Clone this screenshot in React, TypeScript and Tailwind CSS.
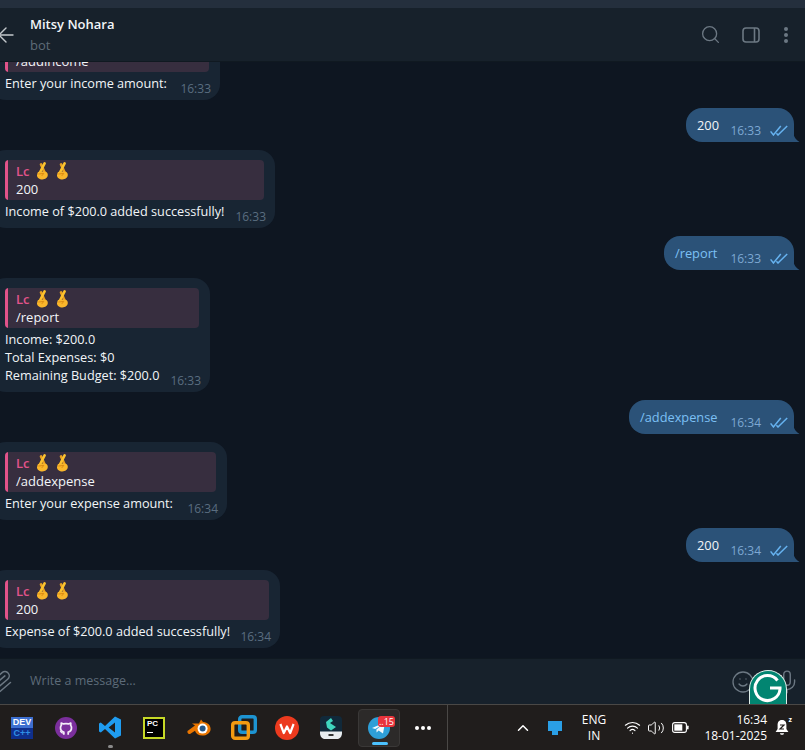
import React from "react";
import { ArrowLeft, Search, Paperclip, Smile, Mic, ChevronUp, Wifi, Volume2 } from "lucide-react";

function Fingers({ x = 0 }: { x?: number }) {
  return (
    <svg width="14" height="18" viewBox="0 0 14 18" style={{ marginLeft: x }} className="shrink-0">
      <path d="M9.4 10 L6 2.4" stroke="#e8a020" strokeWidth="2.6" strokeLinecap="round" fill="none" />
      <path d="M5.2 10 L9.6 1.4" stroke="#fcc22e" strokeWidth="2.6" strokeLinecap="round" fill="none" />
      <path d="M2.4 11.4 C2.4 10.2 3.6 9.4 5 9.4 L9.6 9.4 C11.6 9.4 12.8 10.8 12.8 12.8 C12.8 15.6 10.4 17.4 7.4 17.4 C4.4 17.4 2 15.8 2 13.2 Z" fill="#f9b62b" />
      <path d="M3.8 12 L8.8 11.4 L7 13.6" stroke="#dc8b12" strokeWidth="1" strokeLinecap="round" strokeLinejoin="round" fill="none" />
    </svg>
  );
}

function Ticks() {
  return (
    <svg width="18" height="11" viewBox="0 0 18 11" fill="none" stroke="#66b2ef" strokeWidth="1.5" className="shrink-0">
      <path d="M.6 6.4 L3.4 10 L10.8 1" />
      <path d="M6.4 8.2 L8 10 L17.2 1" />
    </svg>
  );
}

function Reply({ text }: { text: string }) {
  return (
    <div className="flex h-10 overflow-hidden rounded-[4px] bg-[#372e3f]">
      <div className="w-[3px] shrink-0 bg-[#e0538a]" />
      <div className="flex flex-col pl-2 pt-[2px] leading-[18px]">
        <div className="flex h-[18px] items-center font-semibold text-[#e0538a]">
          Lc<Fingers x={5} /><Fingers x={6} />
        </div>
        <div className="text-[#f2f5f8]">{text}</div>
      </div>
    </div>
  );
}

function Left({ w, reply, lines, time, cls = "" }: { w: string; reply: string; lines: string[]; time: string; cls?: string }) {
  return (
    <div className={`relative -ml-[10px] shrink-0 rounded-[16px] bg-[#182533] pb-2 pl-[15px] pr-[11px] pt-[10px] ${w} ${cls}`}>
      <Reply text={reply} />
      <div className="pt-[2px] text-[12.7px] leading-[18px] text-[#f2f5f8]">
        {lines.map((l) => <div key={l}>{l}</div>)}
      </div>
      <span className="absolute bottom-[3px] right-[9px] text-[12px] leading-[16px] text-[#5a6d80]">{time}</span>
    </div>
  );
}

function Right({ text, time, w }: { text: string; time: string; w: string }) {
  return (
    <div className="flex shrink-0 justify-end pr-[11px]">
      <div className={`relative flex h-[34px] items-center rounded-[16px] rounded-br-none bg-[#2b5278] pl-[11px] pr-[6px] ${w}`}>
        <span className={`pt-[2px] text-[12.8px] ${text.startsWith("/") ? "text-[#7cc0f5]" : "text-[#f2f5f8]"}`}>{text}</span>
        <span className="ml-auto flex items-center gap-[9px] pt-[11px] text-[12px] leading-[16px] text-[#7da8d3]">
          {time}<Ticks />
        </span>
        <svg width="7" height="9" viewBox="0 0 7 9" className="absolute bottom-0 left-full -ml-px">
          <path d="M0 0 C1 4 3 7 6.5 9 L0 9 Z" fill="#2b5278" />
        </svg>
      </div>
    </div>
  );
}

function DevCpp() {
  return (
    <div className="flex h-[22px] w-[22px] flex-col font-['Liberation_Sans',sans-serif] text-[9px] font-bold leading-[11px]">
      <span className="h-[11px] bg-[#3d6fd0] text-center text-white">DEV</span>
      <span className="h-[11px] bg-[#0f2f8c] text-center text-[#2f8fe6]">C++</span>
    </div>
  );
}

function Taskbar() {
  return (
    <div className="relative flex h-[46px] items-center border-t border-[#4a4846] bg-[#201d1c] text-white">
      <div className="flex w-[358px] items-center">
        <div className="ml-[11px] w-[22px]"><DevCpp /></div>
        <svg width="22" height="22" viewBox="0 0 24 24" className="ml-[22px]">
          <circle cx="12" cy="12" r="12" fill="#7b2f9c" />
          <path d="M9.6 19.4 V16.4 C7 15.8 6 14 6 11.6 C6 10.6 6.3 9.8 6.9 9.2 L6.8 6.6 L9.3 7.6 C11 7.2 13 7.2 14.7 7.6 L17.2 6.6 L17.1 9.2 C17.7 9.8 18 10.6 18 11.6 C18 14 17 15.8 14.4 16.4 V19.4" fill="none" stroke="#f4ecf8" strokeWidth="1.9" strokeLinejoin="round" />
          <path d="M9.6 17.6 C7.6 18 6.8 17 6 15.8" fill="none" stroke="#f4ecf8" strokeWidth="1.4" strokeLinecap="round" />
        </svg>
        <svg width="24" height="25" viewBox="0 0 24 24" className="ml-[21px]">
          <path d="M17 1 L23 4 L23 20 L17 23 L7 13.6 L2.8 17 L1 16 L1 8 L2.8 7 L7 10.4 Z M17 7 L10.6 12 L17 17 Z" fill="#1f9cf0" fillRule="evenodd" />
        </svg>
        <div className="ml-[21px] flex h-[22px] w-[22px] flex-col bg-[#c6d826] p-[2px]">
          <div className="flex h-full flex-col bg-black px-[2px] font-['Liberation_Sans',sans-serif] text-[8px] font-bold leading-[10px] text-white">
            PC
            <div className="mt-[3px] h-px w-[6px] bg-white" />
          </div>
        </div>
        <svg width="24" height="17" viewBox="0 0 24 17" className="ml-[22px]">
          <path d="M.5 12 L8 6.4 L5 4.4 L12 4.4 L14 .5 L16 3 C21 3.4 23.6 6.4 23.6 10 C23.6 14 19.6 16.6 15.4 16.6 C11.4 16.6 9 14.8 8 11.8 L3 15 C1.2 15.6 0 13.6 .5 12 Z" fill="#ea7600" />
          <circle cx="15.6" cy="9.6" r="5" fill="#fff" />
          <circle cx="15.6" cy="9.6" r="3" fill="#265787" />
        </svg>
        <svg width="26" height="25" viewBox="0 0 26 25" className="ml-[20px]" fill="none" strokeWidth="3.4">
          <rect x="8.7" y="1.7" width="15.6" height="15.6" rx="2.4" stroke="#1d94d2" />
          <rect x="1.7" y="7.7" width="15.6" height="15.6" rx="2.4" stroke="#f49b12" />
        </svg>
        <svg width="24" height="24" viewBox="0 0 24 24" className="ml-[18px]">
          <circle cx="12" cy="12" r="12" fill="#ec3a1e" />
          <path d="M5.4 8 L8.8 17 L12 10.4 L15.2 17 L18.6 8" fill="none" stroke="#fff" strokeWidth="2.2" strokeLinejoin="round" />
        </svg>
        <svg width="22" height="23" viewBox="0 0 22 23" className="ml-[21px]">
          <rect width="22" height="21" rx="4" fill="#11293a" />
          <path d="M6 6 L11 2 L13 5 L10 7 L16 11 L11 14.5 L7 11.5 Z" fill="#3fd6c0" />
          <path d="M0 15.5 H22 V17 C22 20.4 20 23 17 23 H5 C2 23 0 20.4 0 17 Z" fill="#e8edf0" />
          <rect x="8.5" y="18" width="5" height="2" fill="#333" />
        </svg>
      </div>
      <div className="relative flex h-[38px] w-[42px] items-center justify-center rounded-[4px] border border-[#3a3837] bg-[#2c2a29]">
        <svg width="22" height="22" viewBox="0 0 22 22" className="mt-[1px]">
          <circle cx="11" cy="11" r="11" fill="#2e9fd8" />
          <path d="M4 11 L17 5.6 L15 16.6 L10.6 13.6 L8.6 15.6 L8.4 12.6 L14 8 L7.2 12 Z" fill="#f2f8fc" />
        </svg>
        <span className="absolute right-[4px] top-[6px] rounded-[3px] bg-[#e8343c] px-[1px] text-[9px] font-normal leading-[11px] text-white">..15</span>
        <div className="absolute bottom-[1px] left-[13px] h-[3px] w-[16px] rounded-full bg-[#4cc2ff]" />
      </div>
      <div className="ml-[15px] flex w-[16px] items-center justify-between">
        <i className="block h-[4px] w-[4px] rounded-full bg-white" />
        <i className="block h-[4px] w-[4px] rounded-full bg-white" />
        <i className="block h-[4px] w-[4px] rounded-full bg-white" />
      </div>
      <div className="ml-[16px] h-[46px] w-px bg-[#4a4846]" />
      <ChevronUp size={18} strokeWidth={2} className="ml-[66px]" />
      <svg width="16" height="14" viewBox="0 0 16 14" className="ml-[15px]">
        <path d="M1 0 H15 V10 H11 V14 H5 V10 H1 Z" fill="#2a9fe6" />
      </svg>
      <div className="ml-[13px] w-[36px] text-center text-[12px] leading-[16px]">ENG<br />IN</div>
      <Wifi size={17} strokeWidth={1.6} className="ml-[12px]" />
      <Volume2 size={18} strokeWidth={1.3} className="ml-[6px]" />
      <svg width="17" height="11" viewBox="0 0 17 11" className="ml-[7px]">
        <rect x=".6" y=".6" width="13.8" height="9.8" rx="2.2" fill="none" stroke="#fff" strokeWidth="1.1" />
        <rect x="2.3" y="2.3" width="8" height="6.4" fill="#fff" />
        <rect x="15" y="3.5" width="1.6" height="4" rx=".8" fill="#fff" />
      </svg>
      <div className="ml-[14px] w-[64px] pt-px text-right text-[12px] leading-[16px]">16:34<br />18-01-2025</div>
      <div className="relative ml-[8px] h-[17px] w-[14px]">
        <svg width="14" height="17" viewBox="0 0 14 17" className="absolute">
          <path d="M7 1 C3.6 1 2.6 3.6 2.6 6 L2.6 10 L.6 13 H13.4 L11.4 10 L11.4 6 C11.4 3.6 10.4 1 7 1 Z M5 14.2 H9 C9 16.4 5 16.4 5 14.2 Z" fill="#fff" />
          <path d="M5 6 H9 L5 10 H9" stroke="#201d1c" strokeWidth="1.2" fill="none" />
        </svg>
        <span className="absolute -right-[3px] -top-[3px] text-[7px] font-bold leading-[8px]">z</span>
      </div>
      <div className="absolute left-[108px] top-[40px] h-[3px] w-[5px] rounded-full bg-[#8a8a8a]" />
    </div>
  );
}

export default function App() {
  return (
    <div className="relative flex h-[750px] w-[805px] flex-col overflow-hidden bg-[#0e1621] font-['Open_Sans','Noto_Sans',sans-serif] text-[13px] font-normal">
      <div className="h-2 shrink-0 bg-[#242f3d]" />
      <header className="relative z-10 flex h-[54px] shrink-0 items-center border-b border-[#101921] bg-[#17212b]">
        <ArrowLeft size={24} strokeWidth={1.4} className="-ml-[6px] text-[#c3c8cc]" />
        <div className="ml-[12px] flex flex-col">
          <span className="text-[13px] font-semibold leading-[18px] text-[#f2f5f8]">Mitsy Nohara</span>
          <span className="mt-[3px] text-[13px] leading-[18px] text-[#5e6b78]">bot</span>
        </div>
        <div className="ml-auto flex items-center text-[#6c7883]">
          <Search size={21} strokeWidth={1.5} />
          <svg width="18" height="16" viewBox="0 0 18 16" fill="none" stroke="currentColor" strokeWidth="1.6" className="ml-[21px]">
            <rect x="1" y="1" width="16" height="14" rx="3" />
            <path d="M12.5 1 V15" />
          </svg>
          <div className="ml-[24px] mr-[17px] flex flex-col gap-[2px]">
            <i className="block h-[4px] w-[4px] rounded-full bg-current" />
            <i className="block h-[4px] w-[4px] rounded-full bg-current" />
            <i className="block h-[4px] w-[4px] rounded-full bg-current" />
          </div>
        </div>
      </header>
      <main className="flex min-h-0 flex-1 flex-col gap-2 overflow-hidden">
        <Left w="w-[230px]" cls="-mt-[40px]" reply="/addincome" lines={["Enter your income amount:"]} time="16:33" />
        <Right text="200" time="16:33" w="w-[108px]" />
        <Left w="w-[285px]" reply="200" lines={["Income of $200.0 added successfully!"]} time="16:33" />
        <Right text="/report" time="16:33" w="w-[130px]" />
        <Left w="w-[220px]" reply="/report" lines={["Income: $200.0", "Total Expenses: $0", "Remaining Budget: $200.0"]} time="16:33" />
        <Right text="/addexpense" time="16:34" w="w-[165px]" />
        <Left w="w-[237px]" reply="/addexpense" lines={["Enter your expense amount:"]} time="16:34" />
        <Right text="200" time="16:34" w="w-[108px]" />
        <Left w="w-[290px]" reply="200" lines={["Expense of $200.0 added successfully!"]} time="16:34" />
      </main>
      <footer className="flex h-[46px] shrink-0 items-center border-t border-[#101921] bg-[#17212b] text-[#5f6a75]">
        <Paperclip size={26} strokeWidth={1.4} className="-ml-[13px] rotate-[5deg] text-[#6c7883]" />
        <span className="ml-[17px] text-[12.5px] text-[#5d6b79]">Write a message...</span>
        <Smile size={24} strokeWidth={1.3} className="ml-auto text-[#6c7883]" />
        <Mic size={26} strokeWidth={1.3} className="ml-[19px] mr-[5px] text-[#6c7883]" />
      </footer>
      <Taskbar />
      <div className="absolute left-[749px] top-[670px] z-20 flex h-[34px] w-[38px] items-start justify-center overflow-hidden rounded-t-[19px] border-x border-t border-[#dfeee9] bg-[#028571] pt-[2px]">
        <svg width="30" height="30" viewBox="0 0 30 30" fill="none" stroke="#fff" strokeWidth="3">
          <path d="M24.5 7.5 A12.5 12.5 0 1 0 27 16 L27 15 L17 15" />
        </svg>
      </div>
    </div>
  );
}
